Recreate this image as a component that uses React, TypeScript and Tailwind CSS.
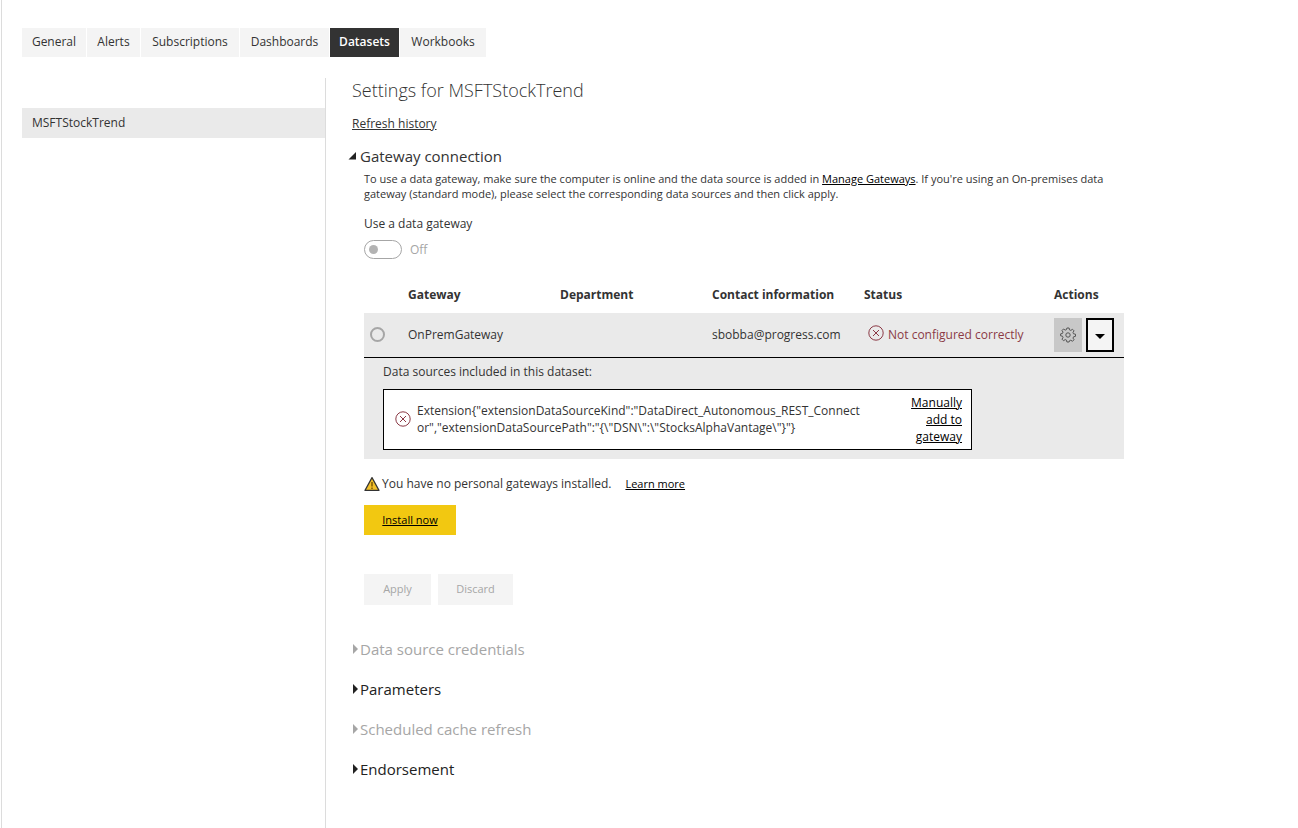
import React from "react";

const tabs = [
  { name: "General", width: "w-[64px]" },
  { name: "Alerts", width: "w-[53px]" },
  { name: "Subscriptions", width: "w-[98px]" },
  { name: "Dashboards", width: "w-[89px]" },
  { name: "Datasets", width: "w-[69px]" },
  { name: "Workbooks", width: "w-[86px]" },
];

const sections = [
  { title: "Data source credentials", enabled: false },
  { title: "Parameters", enabled: true },
  { title: "Scheduled cache refresh", enabled: false },
  { title: "Endorsement", enabled: true },
];

function ErrorIcon() {
  return (
    <svg width="16" height="16" viewBox="0 0 16 16" fill="none" stroke="#8b3a46" aria-hidden="true" className="shrink-0">
      <circle cx="8" cy="8" r="7.2" />
      <path d="M5 5l6 6M11 5l-6 6" />
    </svg>
  );
}

function GearIcon() {
  const teeth =
    "M6.9 1h2.2l.4 1.9 1.3.5 1.7-1.1 1.5 1.5-1 1.7.5 1.3 2 .4v2.1l-2 .5-.5 1.3 1 1.6-1.5 1.6-1.7-1.1-1.3.5L9.1 15H6.9l-.4-1.9-1.3-.5-1.7 1.1L2 12.2l1-1.7-.5-1.3L.6 8.8V6.9l1.9-.5L3 5.1 2 3.5 3.5 2l1.7 1.1 1.3-.5z";
  return (
    <svg width="16" height="16" viewBox="0 0 16 16" fill="none" stroke="#555" strokeLinejoin="round" aria-hidden="true">
      <path d={teeth} />
      <circle cx="8" cy="8" r="2.2" />
    </svg>
  );
}

function WarningIcon() {
  return (
    <svg width="16" height="16" viewBox="0 0 16 16" aria-hidden="true" className="shrink-0">
      <path d="M8 1.6L15 14.4H1z" fill="#f2c029" stroke="#333" strokeWidth="1.2" strokeLinejoin="round" />
      <path d="M8 6v4.6M8 11.6v1.5" stroke="#6b4a00" strokeWidth="1.3" />
    </svg>
  );
}

export default function App() {
  return (
    <div className="flex min-h-screen flex-col bg-white font-['Open_Sans','Noto_Sans',sans-serif] text-[12px] leading-4 text-[#333]">
      <div className="ml-px flex grow flex-col border-l border-[#dcdcdc] pl-5 pt-7">
        <nav className="flex gap-px">
          {tabs.map((tab) => (
            <button
              key={tab.name}
              type="button"
              className={`${tab.width} h-[29px] whitespace-nowrap pb-0.5 text-center ${
                tab.name === "Datasets" ? "bg-[#333] font-semibold text-white" : "bg-[#f4f4f4]"
              }`}
            >
              {tab.name}
            </button>
          ))}
        </nav>

        <div className="mt-[21px] flex grow">
          <aside className="w-[304px] shrink-0 border-r border-[#dcdcdc] pt-[30px]">
            <a href="#dataset" className="flex h-[30px] items-center bg-[#eaeaea] px-2.5">
              MSFTStockTrend
            </a>
          </aside>

          <main className="min-w-0 grow pl-[26px] pr-8">
            <h1 className="text-[18px] font-light leading-6">Settings for MSFTStockTrend</h1>
            <a href="#history" className="mt-3.5 block w-fit underline">
              Refresh history
            </a>

            <h2 className="mt-3 text-[15px] leading-6">
              <button type="button" aria-expanded="true" className="-ml-1 flex items-center gap-1">
                <svg width="8" height="8" viewBox="0 0 8 8" aria-hidden="true">
                  <path d="M8 0v7.5H.5z" fill="#222" />
                </svg>
                Gateway connection
              </button>
            </h2>

            <div className="max-w-[772px] pl-3">
              <p className="mt-[3px] max-w-[740px] text-[11px] leading-[15px]">
                To use a data gateway, make sure the computer is online and the data source is added in{" "}
                <a href="#gateways" className="text-black underline">
                  Manage Gateways
                </a>
                . If you're using an On-premises data gateway (standard mode), please select the corresponding data
                sources and then click apply.
              </p>

              <label htmlFor="use-gateway" className="mt-[15px] block">
                Use a data gateway
              </label>
              <div className="mt-2 flex h-5 items-start gap-2 leading-5 text-[#a6a6a6]">
                <input
                  id="use-gateway"
                  type="checkbox"
                  role="switch"
                  disabled
                  className="flex h-[19px] w-[38px] appearance-none items-center rounded-full border border-[#a6a6a6] pl-1 before:size-[9px] before:rounded-full before:bg-[#b3b3b3]"
                />
                <span>Off</span>
              </div>

              <table className="mt-4 w-full table-fixed text-left">
                <colgroup>
                  <col className="w-11" />
                  <col className="w-[152px]" />
                  <col className="w-[152px]" />
                  <col className="w-[152px]" />
                  <col className="w-[190px]" />
                  <col />
                </colgroup>
                <thead>
                  <tr className="h-[37px]">
                    <td />
                    <th className="font-bold">Gateway</th>
                    <th className="font-bold">Department</th>
                    <th className="whitespace-nowrap font-bold">Contact information</th>
                    <th className="font-bold">Status</th>
                    <th className="font-bold">Actions</th>
                  </tr>
                </thead>
                <tbody className="bg-[#eaeaea]">
                  <tr className="h-11 border-b border-black">
                    <td className="pl-1.5">
                      <input
                        type="radio"
                        name="gateway"
                        aria-label="OnPremGateway"
                        className="block size-[15px] appearance-none rounded-full border-2 border-[#a6a6a6]"
                      />
                    </td>
                    <td>OnPremGateway</td>
                    <td />
                    <td className="whitespace-nowrap">sbobba@progress.com</td>
                    <td>
                      <span className="flex items-start gap-1 whitespace-nowrap pl-1 text-[#8b3a46]">
                        <ErrorIcon />
                        <span className="leading-5">Not configured correctly</span>
                      </span>
                    </td>
                    <td>
                      <span className="flex gap-1">
                        <button
                          type="button"
                          aria-label="Gateway settings"
                          className="flex h-[34px] w-7 items-center justify-center bg-[#c8c8c8]"
                        >
                          <GearIcon />
                        </button>
                        <button
                          type="button"
                          aria-label="Hide data sources"
                          className="flex h-[34px] w-7 items-center justify-center border-2 border-black bg-[#f4f4f4] pt-1"
                        >
                          <svg width="10" height="5" viewBox="0 0 10 5" aria-hidden="true">
                            <path d="M0 0h10L5 5z" fill="#000" />
                          </svg>
                        </button>
                      </span>
                    </td>
                  </tr>
                  <tr>
                    <td colSpan={6} className="pb-[9px] pl-[19px] pt-1.5">
                      <p>Data sources included in this dataset:</p>
                      <div className="mt-[9px] flex max-w-[589px] items-center border border-black bg-white py-1 pl-[11px] pr-[9px] leading-[17px]">
                        <ErrorIcon />
                        <p className="ml-1.5 w-[446px] break-all">
                          {'Extension{"extensionDataSourceKind":"DataDirect_Autonomous_REST_Connector","extensionDataSourcePath":"{\\"DSN\\":\\"StocksAlphaVantage\\"}"}'}
                        </p>
                        <a href="#add" className="ml-auto w-[60px] text-right text-black underline">
                          Manually add to gateway
                        </a>
                      </div>
                    </td>
                  </tr>
                </tbody>
              </table>

              <div className="mt-4 flex h-[18px] items-center">
                <span className="mr-0.5 flex">
                  <WarningIcon />
                </span>
                <span>You have no personal gateways installed.</span>
                <a href="#learn" className="ml-3.5 text-[11px] text-black underline">
                  Learn more
                </a>
              </div>
              <a
                href="#install"
                className="mt-3 flex h-[30px] w-[92px] items-center justify-center bg-[#f2c811] text-[11px] text-black underline"
              >
                Install now
              </a>

              <div className="mt-[39px] flex gap-[7px] text-[11px] text-[#a6a6a6]">
                <button type="button" disabled className="h-[31px] w-[67px] bg-[#f4f4f4]">
                  Apply
                </button>
                <button type="button" disabled className="h-[31px] w-[75px] bg-[#f4f4f4]">
                  Discard
                </button>
              </div>
            </div>

            <div className="mt-8 flex flex-col gap-4 pb-8 text-[15px] leading-6">
              {sections.map((section) => (
                <h2 key={section.title} className={section.enabled ? "text-[#222]" : "text-[#a6a6a6]"}>
                  <button type="button" disabled={!section.enabled} aria-expanded="false" className="flex items-center gap-0.5">
                    <svg width="6" height="10" viewBox="0 0 6 10" aria-hidden="true">
                      <path d="M1 0l5 5-5 5z" fill="currentColor" />
                    </svg>
                    {section.title}
                  </button>
                </h2>
              ))}
            </div>
          </main>
        </div>
      </div>
    </div>
  );
}
